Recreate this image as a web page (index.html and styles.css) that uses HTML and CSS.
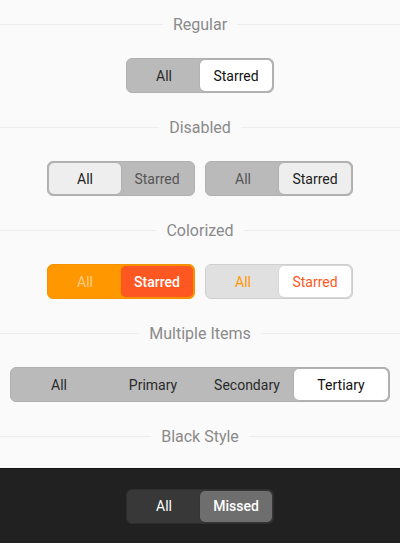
FILE: index.html
```html
<!DOCTYPE html>
<html lang="en">
    <head>
        <meta charset="UTF-8">
        <title>Segmented Controls</title>
        <link rel="stylesheet" href="styles.css">
    </head>
    <body>
        <div class="light">
            <div class="section">
                <h3 class="title"><span>Regular</span></h3>
                <div class="row">
                    <div class="segmented">
                        <div class="item">All</div>
                        <div class="item selected">Starred</div>
                    </div>
                </div>
            </div>

            <div class="section">
                <h3 class="title"><span>Disabled</span></h3>
                <div class="row">
                    <div class="segmented disabled">
                        <div class="item selected">All</div>
                        <div class="item">Starred</div>
                    </div>
                    <div class="segmented disabled">
                        <div class="item">All</div>
                        <div class="item selected">Starred</div>
                    </div>
                </div>
            </div>

            <div class="section">
                <h3 class="title"><span>Colorized</span></h3>
                <div class="row">
                    <div class="segmented orange">
                        <div class="item">All</div>
                        <div class="item selected">Starred</div>
                    </div>
                    <div class="segmented orange-light">
                        <div class="item">All</div>
                        <div class="item selected">Starred</div>
                    </div>
                </div>
            </div>

            <div class="section">
                <h3 class="title"><span>Multiple Items</span></h3>
                <div class="row">
                    <div class="segmented wide">
                        <div class="item">All</div>
                        <div class="item">Primary</div>
                        <div class="item">Secondary</div>
                        <div class="item selected">Tertiary</div>
                    </div>
                </div>
            </div>

            <div class="section last">
                <h3 class="title"><span>Black Style</span></h3>
            </div>
        </div>
        <div class="dark">
            <div class="segmented black">
                <div class="item">All</div>
                <div class="item selected">Missed</div>
            </div>
        </div>
    </body>
</html>
```

FILE: styles.css
```css
body {
    font-family: Roboto, 'Noto Sans', sans-serif;
    margin: 0;
    padding: 0;
    background-color: #fafafa;
}
.light {
    padding-top: 14px;
    height: 468px;
    box-sizing: border-box;
}
.section {
    margin-bottom: 24px;
}
.section.last {
    margin-bottom: 0;
}
.title {
    display: flex;
    align-items: center;
    height: 20px;
    margin: 0 0 24px 0;
    font-size: 16px;
    font-weight: 400;
    color: #8a8a8a;
}
.title::before,
.title::after {
    content: '';
    flex-grow: 1;
    height: 1px;
    background-color: #ececec;
}
.title span {
    padding: 0 10px;
}
.row {
    display: flex;
    justify-content: center;
    gap: 10px;
}
.segmented {
    display: flex;
    width: 148px;
    height: 35px;
    box-sizing: border-box;
    padding: 1px;
    border-radius: 6px;
    background-color: #bababa;
    border: 1px solid #b0b0b0;
}
.item {
    flex: 1;
    display: flex;
    align-items: center;
    justify-content: center;
    font-size: 14px;
    color: #2a2a2a;
    border-radius: 5px;
}
.item.selected {
    background-color: white;
    color: #111;
    box-shadow: 0 0 2px rgba(0,0,0,0.15);
}
.disabled .item {
    color: #555;
}
.disabled .item.selected {
    background-color: #eeeeee;
    color: #222;
}
.orange {
    background-color: #ff9800;
    border-color: #f59200;
}
.orange .item {
    color: #ffcd87;
}
.orange .item.selected {
    background-color: #ff5722;
    color: white;
    font-weight: 500;
}
.orange-light {
    background-color: #e0e0e0;
    border-color: #cfcfcf;
}
.orange-light .item {
    color: #ff9800;
}
.orange-light .item.selected {
    background-color: white;
    color: #ff5722;
}
.wide {
    width: 380px;
}
.dark {
    height: 75px;
    background-color: #212121;
    border-top: 1px solid #111;
    box-sizing: border-box;
    display: flex;
    justify-content: center;
    align-items: center;
}
.black {
    background-color: #383838;
    border-color: #2e2e2e;
}
.black .item {
    color: white;
}
.black .item.selected {
    background-color: #6e6e6e;
    color: white;
    font-weight: 500;
}
```
